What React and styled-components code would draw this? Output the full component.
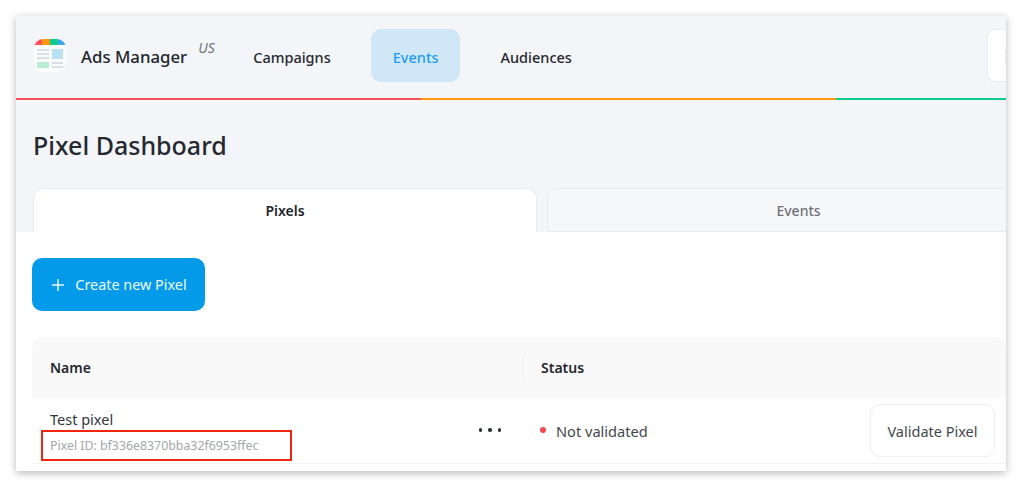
import styled, { createGlobalStyle } from "styled-components";

const GlobalStyle = createGlobalStyle`
  html, body {
    margin: 0;
    background: #fff;
    overflow: hidden;
  }
  * {
    box-sizing: border-box;
  }
`;

const Page = styled.div`
  width: 1024px;
  height: 490px;
  padding: 16px 18px 19px 16px;
  font-family: "Noto Sans", "Open Sans", sans-serif;
  color: #2b2f36;
`;

const Window = styled.div`
  height: 455px;
  background: #fff;
  overflow: hidden;
  box-shadow: 0 2px 8px rgba(0, 0, 0, 0.28);
`;

const Header = styled.header`
  height: 82px;
  background: #f3f5f9;
  display: flex;
  align-items: center;
  padding: 0 0 3px 18px;
  overflow: hidden;
`;

const Logo = styled.svg`
  width: 32px;
  height: 33px;
  flex: none;
`;

const Brand = styled.div`
  margin: 3px 0 0 15px;
  font-size: 16.8px;
  font-weight: 500;
  line-height: 24px;
  color: #22262c;
  white-space: nowrap;
`;

const Region = styled.span`
  width: 44px;
  flex: none;
  padding-left: 11px;
  font-size: 14px;
  font-style: italic;
  color: #71757c;
  margin-top: -17px;
`;

const Nav = styled.nav`
  display: flex;
  gap: 18px;
`;

const NavItem = styled.a`
  height: 53px;
  padding: 3px 22px 0;
  display: flex;
  align-items: center;
  border-radius: 10px;
  font-size: 14.5px;
  font-weight: 500;
  color: ${(p) => (p.$active ? "#1f9dec" : "#25292f")};
  background: ${(p) => (p.$active ? "#d0e7f8" : "transparent")};
`;

const AccountBox = styled.div`
  flex: none;
  width: 100px;
  height: 53px;
  margin-left: 393px;
  background: #fff;
  border: 1px solid #e9ebef;
  border-radius: 8px;
  padding: 18px 0 0 17px;
`;

const AccountChip = styled.div`
  width: 30px;
  height: 19px;
  border: 1px solid #e9ebef;
  border-radius: 4px;
`;

const Stripe = styled.div`
  display: grid;
  grid-template-columns: 405px 415px 170px;
  height: 2px;
`;

const StripePart = styled.div`
  background: ${(p) => p.$color};
`;

const TopArea = styled.div`
  height: 132px;
  background: #f3f5f9;
  padding: 27px 0 0 17px;
  display: flex;
  flex-direction: column;
`;

const Title = styled.h1`
  margin: 0;
  font-size: 25px;
  font-weight: 500;
  line-height: 36px;
  color: #25292f;
`;

const Tabs = styled.div`
  display: flex;
  gap: 10px;
  margin-top: 25px;
`;

const Tab = styled.div`
  flex: none;
  height: 44px;
  width: ${(p) => p.$width}px;
  display: flex;
  align-items: center;
  justify-content: center;
  font-size: 14px;
  font-weight: ${(p) => (p.$active ? 600 : 500)};
  color: ${(p) => (p.$active ? "#22262c" : "#6f7379")};
  background: ${(p) => (p.$active ? "#fff" : "#f6f7f9")};
  border: 1px solid #e9ebef;
  border-bottom: ${(p) => (p.$active ? "none" : "1px solid #e9ebef")};
  border-radius: 10px 10px 0 0;
`;

const Content = styled.main`
  padding: 26px 0 0 16px;
  position: relative;
`;

const CreateButton = styled.button`
  width: 173px;
  height: 53px;
  display: flex;
  align-items: center;
  justify-content: center;
  gap: 11px;
  border: none;
  border-radius: 10px;
  background: #039be9;
  color: #eef8fe;
  font-family: inherit;
  font-size: 14.4px;
  padding: 0 0 0 2px;
`;

const PlusIcon = styled.svg`
  width: 12px;
  height: 12px;
`;

const Table = styled.div`
  margin-top: 26px;
  width: 974px;
`;

const HeadRow = styled.div`
  height: 61px;
  display: grid;
  grid-template-columns: 490px 1fr;
  align-items: center;
  background: #f9f9f9;
  border-radius: 10px 10px 0 0;
`;

const HeadCell = styled.div`
  padding-left: 18px;
  height: 25px;
  display: flex;
  align-items: center;
  font-size: 14px;
  font-weight: 600;
  color: #25292f;
  border-left: ${(p) => (p.$divided ? "1px solid #f0f0f0" : "none")};
`;

const BodyRow = styled.div`
  height: 66px;
  display: grid;
  grid-template-columns: 490px 1fr;
  border-bottom: 1px solid #f3f3f3;
`;

const NameCell = styled.div`
  position: relative;
  padding: 11px 0 0 18px;
`;

const RowName = styled.div`
  font-size: 14.5px;
  line-height: 20px;
  color: #33373d;
`;

const RowId = styled.div`
  font-size: 12.35px;
  line-height: 18px;
  margin-top: 8px;
  color: #a3a6ab;
`;

const MoreDots = styled.div`
  position: absolute;
  right: 21px;
  top: 30px;
  display: flex;
  gap: 6px;
`;

const Dot = styled.span`
  width: 3.5px;
  height: 3.5px;
  border-radius: 50%;
  background: #2b2f36;
`;

const StatusCell = styled.div`
  display: flex;
  align-items: center;
  padding: 0 11px 0 18px;
`;

const StatusDot = styled.span`
  width: 6px;
  height: 6px;
  border-radius: 50%;
  background: #f24a4f;
  margin: 0 10px 2px 0;
`;

const StatusText = styled.span`
  font-size: 14.6px;
  color: #43474d;
`;

const ValidateButton = styled.button`
  margin-left: auto;
  width: 125px;
  height: 53px;
  background: #fff;
  border: 1px solid #eceef1;
  border-radius: 10px;
  font-family: inherit;
  font-size: 14.5px;
  color: #43474d;
  padding: 0;
`;

const Highlight = styled.div`
  position: absolute;
  left: 25px;
  top: 198px;
  width: 251px;
  height: 31px;
  border: 2px solid #f0250f;
  pointer-events: none;
`;

const LogoMark = () => (
  <Logo viewBox="0 0 32 33">
    <defs>
      <clipPath id="logoClip">
        <rect width="32" height="33" rx="9" />
      </clipPath>
    </defs>
    <g clipPath="url(#logoClip)">
      <rect width="32" height="33" fill="#fbfcfc" />
      <rect width="8" height="6" fill="#f9525a" />
      <rect x="8" width="8" height="6" fill="#ff9811" />
      <rect x="16" width="8" height="6" fill="#0ccb8b" />
      <rect x="24" width="8" height="6" fill="#3aa6ec" />
      <rect x="3" y="10" width="12" height="2" fill="#d9dfe8" />
      <rect x="3" y="14" width="12" height="2" fill="#d9dfe8" />
      <rect x="3" y="18" width="12" height="2" fill="#d9dfe8" />
      <rect x="18" y="10" width="11" height="10" fill="#b8e1f4" />
      <rect x="3" y="23" width="12" height="6" fill="#b8edd4" />
      <rect x="18" y="23" width="11" height="2" fill="#d9dfe8" />
      <rect x="18" y="27" width="11" height="2" fill="#d9dfe8" />
    </g>
  </Logo>
);

export default function App() {
  return (
    <Page>
      <GlobalStyle />
      <Window>
        <Header>
          <LogoMark />
          <Brand>Ads Manager</Brand>
          <Region>US</Region>
          <Nav>
            <NavItem>Campaigns</NavItem>
            <NavItem $active>Events</NavItem>
            <NavItem>Audiences</NavItem>
          </Nav>
          <AccountBox>
            <AccountChip />
          </AccountBox>
        </Header>
        <Stripe>
          <StripePart $color="#f9525a" />
          <StripePart $color="#ff9811" />
          <StripePart $color="#0ccb8b" />
        </Stripe>
        <TopArea>
          <Title>Pixel Dashboard</Title>
          <Tabs>
            <Tab $active $width={504}>Pixels</Tab>
            <Tab $width={503}>Events</Tab>
          </Tabs>
        </TopArea>
        <Content>
          <CreateButton>
            <PlusIcon viewBox="0 0 12 12">
              <path d="M6 0v12M0 6h12" stroke="#eef8fe" strokeWidth="1.4" fill="none" />
            </PlusIcon>
            Create new Pixel
          </CreateButton>
          <Table>
            <HeadRow>
              <HeadCell>Name</HeadCell>
              <HeadCell $divided>Status</HeadCell>
            </HeadRow>
            <BodyRow>
              <NameCell>
                <RowName>Test pixel</RowName>
                <RowId>Pixel ID: bf336e8370bba32f6953ffec</RowId>
                <MoreDots>
                  <Dot />
                  <Dot />
                  <Dot />
                </MoreDots>
              </NameCell>
              <StatusCell>
                <StatusDot />
                <StatusText>Not validated</StatusText>
                <ValidateButton>Validate Pixel</ValidateButton>
              </StatusCell>
            </BodyRow>
          </Table>
          <Highlight />
        </Content>
      </Window>
    </Page>
  );
}
